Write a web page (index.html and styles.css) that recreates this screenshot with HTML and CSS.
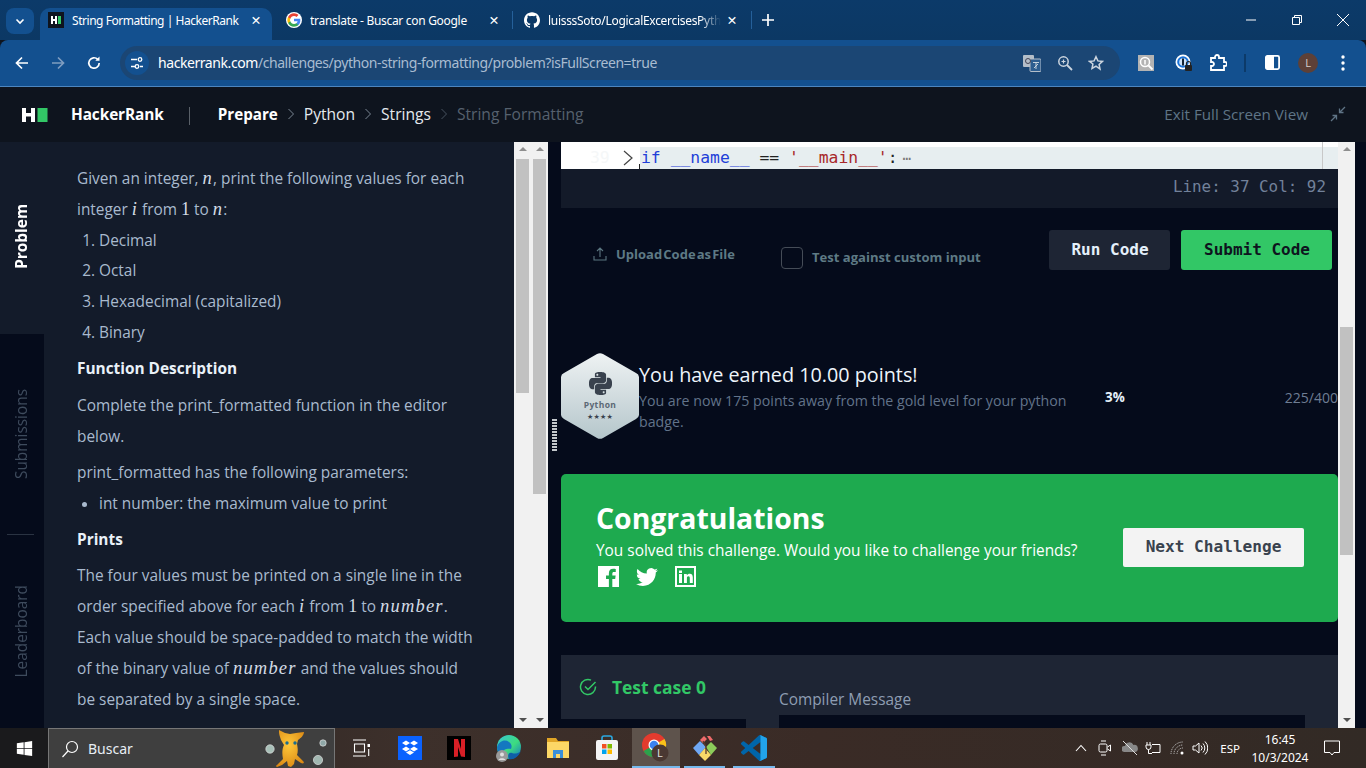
FILE: index.html
```html
<!DOCTYPE html>
<html lang="en">
<head>
<meta charset="utf-8">
<title>String Formatting | HackerRank</title>
<link rel="stylesheet" href="styles.css">
</head>
<body>
<div class="page">
  <div class="tabstrip">
    <div class="tab-menu"><svg width="12" height="12" viewBox="0 0 12 12"><path d="M2.500 4.500 6 8l3.500-3.500" fill="none" stroke="#fff" stroke-width="1.600"/></svg></div>
    <div class="tab tab-active">
      <svg class="fav" viewBox="0 0 16 16"><rect width="16" height="16" fill="#0e141e"/><path d="M3 4h2v3h2V4h2v8H7V9H5v3H3z" fill="#fff"/><rect x="10" y="4" width="3" height="8" fill="#32c766"/></svg>
      <span class="tab-title">String Formatting | HackerRank</span>
      <span class="tab-x">✕</span>
    </div>
    <div class="tab tab-2">
      <svg class="fav" viewBox="0 0 48 48"><circle cx="24" cy="24" r="24" fill="#fff"/><path fill="#4285f4" d="M43 24.500c0-1.400-.1-2.700-.4-4H24v7.600h10.800c-.5 2.500-1.900 4.600-4 6v5h6.500C41 35.600 43 30.500 43 24.500z"/><path fill="#34a853" d="M24 44c5.400 0 9.900-1.800 13.300-4.900l-6.500-5c-1.800 1.200-4.100 1.900-6.800 1.900-5.200 0-9.700-3.500-11.200-8.300H6.100v5.200C9.400 39.500 16.200 44 24 44z"/><path fill="#fbbc05" d="M12.800 27.700c-.4-1.200-.6-2.400-.6-3.700s.2-2.500.6-3.700v-5.200H6.100C4.700 17.800 4 20.800 4 24s.7 6.200 2.100 8.900z"/><path fill="#ea4335" d="M24 12c3 0 5.600 1 7.700 3l5.700-5.700C33.900 6.100 29.400 4 24 4 16.200 4 9.400 8.500 6.100 15.100l6.700 5.200C14.300 15.500 18.800 12 24 12z"/></svg>
      <span class="tab-title">translate - Buscar con Google</span>
      <span class="tab-x">✕</span>
    </div>
    <span class="tab-sep"></span>
    <div class="tab tab-3">
      <svg class="fav" viewBox="0 0 24 24"><path fill="#fff" d="M12 .297c-6.630 0-12 5.373-12 12 0 5.303 3.438 9.800 8.205 11.385.6.113.82-.258.82-.577 0-.285-.01-1.040-.015-2.040-3.338.724-4.042-1.610-4.042-1.610C4.422 18.070 3.633 17.700 3.633 17.700c-1.087-.744.084-.729.084-.729 1.205.084 1.838 1.236 1.838 1.236 1.070 1.835 2.809 1.305 3.495.998.108-.776.417-1.305.76-1.605-2.665-.3-5.466-1.332-5.466-5.930 0-1.310.465-2.380 1.235-3.220-.135-.303-.54-1.523.105-3.176 0 0 1.005-.322 3.300 1.230.96-.267 1.980-.399 3-.405 1.020.006 2.040.138 3 .405 2.280-1.552 3.285-1.230 3.285-1.230.645 1.653.24 2.873.12 3.176.765.84 1.230 1.910 1.230 3.220 0 4.610-2.805 5.625-5.475 5.920.42.36.81 1.096.81 2.220 0 1.606-.015 2.896-.015 3.286 0 .315.21.69.825.57C20.565 22.092 24 17.592 24 12.297c0-6.627-5.373-12-12-12"/></svg>
      <span class="tab-title tab-fade">luisssSoto/LogicalExcercisesPyth</span>
      <span class="tab-x">✕</span>
    </div>
    <span class="tab-sep"></span>
    <svg class="tab-plus" width="14" height="14" viewBox="0 0 14 14"><path d="M7 1v12M1 7h12" stroke="#fff" stroke-width="1.700"/></svg>
    <div class="win-controls">
      <svg width="12" height="12" viewBox="0 0 12 12"><path d="M1 6h10" stroke="#fff"/></svg>
      <svg width="12" height="12" viewBox="0 0 12 12"><path d="M1.500 3.500h7v7h-7zM3.500 3.500v-2h7v7h-2" fill="none" stroke="#fff"/></svg>
      <svg width="14" height="14" viewBox="0 0 14 14"><path d="M1 1l12 12M13 1 1 13" stroke="#fff"/></svg>
    </div>
  </div>

  <div class="toolbar">
    <svg class="nav-ic" width="16" height="16" viewBox="0 0 16 16"><path d="M14 8H2.500M8 2.500 2.500 8 8 13.500" fill="none" stroke="#fff" stroke-width="1.700"/></svg>
    <svg class="nav-ic" width="16" height="16" viewBox="0 0 16 16"><path d="M2 8h11.500M8 2.500 13.500 8 8 13.500" fill="none" stroke="#7f9dc0" stroke-width="1.700"/></svg>
    <svg class="nav-ic" width="16" height="16" viewBox="0 0 16 16"><path d="M13.200 8a5.200 5.200 0 1 1-1.500-3.700" fill="none" stroke="#fff" stroke-width="1.700"/><path d="M13.500 1.500v4.200H9.300z" fill="#fff"/></svg>
    <div class="omnibox">
      <span class="chip"><svg width="14" height="14" viewBox="0 0 14 14"><path d="M1 3.500h6M10 10.500h3M1 10.500h4" stroke="#fff" stroke-width="1.400"/><circle cx="10" cy="3.500" r="1.800" fill="none" stroke="#fff" stroke-width="1.300"/><circle cx="7" cy="10.500" r="1.800" fill="none" stroke="#fff" stroke-width="1.300"/></svg></span>
      <span class="url"><span class="url-host">hackerrank.com</span>/challenges/python-string-formatting/problem?isFullScreen=true</span>
      <span class="omni-icons">
        <svg width="18" height="18" viewBox="0 0 18 18"><rect x="0" y="1" width="11" height="12" rx="1" fill="#b4bec9"/><rect x="7" y="5" width="11" height="12.500" rx="1" fill="#2d5d8f" stroke="#b4bec9"/><circle cx="5" cy="7" r="2.500" fill="none" stroke="#445" stroke-width="1"/><path d="M10 8.500h6M13 8v7M11 14l4-4" stroke="#d5dce3" stroke-width=".9"/></svg>
        <svg width="16" height="16" viewBox="0 0 16 16"><circle cx="6.500" cy="6.500" r="4.700" fill="none" stroke="#ccd5df" stroke-width="1.500"/><path d="M10 10l5 5" stroke="#ccd5df" stroke-width="1.800"/><path d="M4.500 6.500h4M6.500 4.500v4" stroke="#ccd5df" stroke-width="1.200"/></svg>
        <svg width="16" height="16" viewBox="0 0 16 16"><path d="M8 1.700l1.900 4.200 4.600.5-3.400 3.100.9 4.500L8 11.200l-4 2.300.9-4.500L1.500 6.400l4.600-.5z" fill="none" stroke="#ccd5df" stroke-width="1.500"/></svg>
      </span>
    </div>
    <div class="ext-icons">
      <svg width="16" height="16" viewBox="0 0 16 16"><rect width="16" height="16" fill="#b3b3b3"/><circle cx="7" cy="7" r="4.500" fill="none" stroke="#fff" stroke-width="1.500"/><path d="M10.500 10.500l4 4" stroke="#fff" stroke-width="1.800"/><path d="M7 5v4.500" stroke="#fff" stroke-width="1.500"/></svg>
      <svg width="18" height="18" viewBox="0 0 18 18"><circle cx="8" cy="8" r="7.500" fill="#fff"/><circle cx="8" cy="8" r="5.800" fill="#1a73d9"/><circle cx="8" cy="8" r="3.800" fill="#cfe3f7"/><rect x="7" y="4.500" width="2" height="7" fill="#123"/><rect x="10" y="11" width="7" height="6" rx="1" fill="#222"/><path d="M11.500 11V9.500a2 2 0 0 1 4 0V11" fill="none" stroke="#222" stroke-width="1.200"/></svg>
      <svg width="18" height="18" viewBox="0 0 18 18"><path d="M2 4h4V3a2 2 0 0 1 4 0v1h5v4h1a2 2 0 0 1 0 4h-1v4H2v-4h1a2 2 0 0 0 0-4H2z" fill="none" stroke="#fff" stroke-width="1.800"/></svg>
      <span class="ext-sep"></span>
      <svg width="15" height="15" viewBox="0 0 15 15"><rect x=".9" y=".9" width="13.200" height="13.200" rx="1.500" fill="none" stroke="#fff" stroke-width="1.800"/><rect x="1" y="1" width="8" height="13" fill="#fff"/></svg>
      <span class="avatar">L</span>
      <svg width="4" height="16" viewBox="0 0 4 16"><circle cx="2" cy="2" r="1.700" fill="#fff"/><circle cx="2" cy="8" r="1.700" fill="#fff"/><circle cx="2" cy="14" r="1.700" fill="#fff"/></svg>
    </div>
  </div>

  <header class="hr-header">
    <svg class="hr-logo" width="26" height="16" viewBox="0 0 26 16"><path d="M0 1h4v5h5V1h4v14H9V9.500H4V15H0z" fill="#fff"/><rect x="15.500" y="1" width="10" height="14" fill="#32c766"/></svg>
    <span class="hr-name">HackerRank</span>
    <span class="hr-div"></span>
    <nav class="crumbs">
      <b>Prepare</b>
      <svg class="chev" width="26" height="12" viewBox="0 0 26 12"><path d="M10.500 1l5 5-5 5" fill="none" stroke="#7b8794"/></svg>
      <span>Python</span>
      <svg class="chev" width="26" height="12" viewBox="0 0 26 12"><path d="M10.500 1l5 5-5 5" fill="none" stroke="#7b8794"/></svg>
      <span>Strings</span>
      <svg class="chev" width="26" height="12" viewBox="0 0 26 12"><path d="M10.500 1l5 5-5 5" fill="none" stroke="#47525f"/></svg>
      <span class="dim">String Formatting</span>
    </nav>
    <span class="exit">Exit Full Screen View</span>
    <svg class="exit-ic" width="16" height="16" viewBox="0 0 16 16"><path d="M15 1 9.500 6.500M9.500 2.500v4h4M1 15l5.500-5.500M6.500 13.500v-4h-4" fill="none" stroke="#5f7486" stroke-width="1.300"/></svg>
  </header>

  <main class="main">
    <aside class="rail">
      <div class="rail-tab rail-on"><span class="vtext">Problem</span></div>
      <div class="rail-tab rail-sub"><span class="vtext">Submissions</span></div>
      <div class="rail-rule"></div>
      <div class="rail-tab rail-lead"><span class="vtext">Leaderboard</span></div>
    </aside>

    <section class="problem">
      <p class="p-tight">Given an integer, <i class="m">n</i>, print the following values for each integer <i class="m">i</i> from <span class="m1">1</span> to <i class="m">n</i>:</p>
      <ol>
        <li>Decimal</li>
        <li>Octal</li>
        <li>Hexadecimal (capitalized)</li>
        <li>Binary</li>
      </ol>
      <h4>Function Description</h4>
      <p>Complete the print_formatted function in the editor below.</p>
      <p class="p-tight">print_formatted has the following parameters:</p>
      <ul><li>int number: the maximum value to print</li></ul>
      <h4>Prints</h4>
      <p>The four values must be printed on a single line in the order specified above for each <i class="m">i</i> from <span class="m1">1</span> to <i class="m">number</i>. Each value should be space-padded to match the width of the binary value of <i class="m">number</i> and the values should be separated by a single space.</p>
    </section>

    <div class="sb"><span class="up"></span><span class="thumb thumb-a"></span><span class="sb-fill"></span><span class="down"></span></div>
    <div class="sb"><span class="up"></span><span class="thumb thumb-b"></span><span class="sb-fill"></span><span class="down"></span></div>

    <div class="gutter"><span class="grip"></span></div>

    <section class="right">
      <div class="editor">
        <span class="ln">39</span>
        <svg class="fold" width="12" height="16" viewBox="0 0 12 16"><path d="M2 1l8 7-8 7" fill="none" stroke="#444" stroke-width="1.200"/></svg>
        <div class="code-line"><span class="kw">if</span> <span class="kw">__name__</span> == <span class="str">'__main__'</span>:<span class="dots">⋯</span><span class="ruler"></span></div>
      </div>
      <div class="status">Line: 37 Col: 92</div>

      <div class="actions">
        <div class="upload">
          <svg width="14" height="14" viewBox="0 0 14 14"><path d="M7 10V1.500M4 4l3-3 3 3M1 9v4h12V9" fill="none" stroke="#5b7680" stroke-width="1.100"/></svg>
          <span>Upload Code as File</span>
        </div>
        <div class="custom"><span class="check"></span><span>Test against custom input</span></div>
        <button class="btn btn-run">Run Code</button>
        <button class="btn btn-submit">Submit Code</button>
      </div>

      <div class="earned">
        <div class="badge">
          <svg class="hex" width="78" height="86" viewBox="0 0 78 86"><defs><linearGradient id="hexg" x1="0" y1="0" x2="0" y2="1"><stop offset="0" stop-color="#eef2f3"/><stop offset="1" stop-color="#b5c6cb"/></linearGradient></defs><path d="M36 1a6 6 0 0 1 6 0l33 19a5 5 0 0 1 3 5v36a5 5 0 0 1-3 5L42 85a6 6 0 0 1-6 0L3 66a5 5 0 0 1-3-5V25a5 5 0 0 1 3-5z" fill="url(#hexg)"/></svg>
          <svg class="py" width="23" height="23" viewBox="0 0 24 24"><path fill="#39424e" d="M14.250.18l.9.2.73.26.59.3.45.32.34.34.25.34.16.33.1.3.04.26.02.2-.01.13V8.500l-.05.63-.13.55-.21.46-.26.38-.3.31-.33.25-.35.19-.35.14-.33.1-.3.07-.26.04-.21.02H8.770l-.69.05-.59.14-.5.22-.41.27-.33.32-.27.35-.2.36-.15.37-.1.35-.07.32-.04.27-.02.21v3.060H3.170l-.21-.03-.28-.07-.32-.12-.35-.18-.36-.26-.36-.36-.35-.46-.32-.59-.28-.73-.21-.88-.14-1.050-.05-1.230.06-1.220.16-1.040.24-.87.32-.71.36-.57.4-.44.42-.33.42-.24.4-.16.36-.1.32-.05.24-.01h.16l.06.01h8.160v-.83H6.180l-.01-2.750-.02-.37.05-.34.11-.31.17-.28.25-.26.31-.23.38-.2.44-.18.51-.15.58-.12.64-.1.71-.06.77-.04.84-.02 1.270.05zm-6.300 1.980l-.23.33-.08.41.08.41.23.34.33.22.41.09.41-.09.33-.22.23-.34.08-.41-.08-.41-.23-.33-.33-.22-.41-.09-.41.09zm13.090 3.950l.28.06.32.12.35.18.36.27.36.35.35.47.32.59.28.73.21.88.14 1.040.05 1.230-.06 1.230-.16 1.040-.24.86-.32.71-.36.57-.4.45-.42.33-.42.24-.4.16-.36.09-.32.05-.24.02-.16-.01h-8.220v.82h5.840l.01 2.760.02.36-.05.34-.11.31-.17.29-.25.25-.31.24-.38.2-.44.17-.51.15-.58.13-.64.09-.71.07-.77.04-.84.01-1.270-.04-1.070-.14-.9-.2-.73-.25-.59-.3-.45-.33-.34-.34-.25-.34-.16-.33-.1-.3-.04-.25-.02-.2.01-.13v-5.340l.05-.64.13-.54.21-.46.26-.38.3-.32.33-.24.35-.2.35-.14.33-.1.3-.06.26-.04.21-.02.13-.01h5.840l.69-.05.59-.14.5-.21.41-.28.33-.32.27-.35.2-.36.15-.36.1-.35.07-.32.04-.28.02-.21V6.070h2.090l.14.01zm-6.470 14.250l-.23.33-.08.41.08.41.23.33.33.23.41.08.41-.08.33-.23.23-.33.08-.41-.08-.41-.23-.33-.33-.23-.41-.08-.41.08z"/></svg>
          <span class="badge-name">Python</span>
          <span class="badge-stars">★★★★</span>
        </div>
        <div class="earned-text">
          <div class="earned-title">You have earned 10.00 points!</div>
          <div class="earned-sub">You are now 175 points away from the gold level for your python badge.</div>
        </div>
        <span class="pct">3%</span>
        <span class="score">225/400</span>
      </div>

      <div class="congrats">
        <div class="congrats-main">
          <div class="congrats-title">Congratulations</div>
          <div class="congrats-sub">You solved this challenge. Would you like to challenge your friends?</div>
          <div class="social">
            <svg width="21" height="21" viewBox="0 0 22 22"><path fill="#fff" fill-rule="evenodd" d="M0 0h22v22h-7v-8.500h3l.5-3.500H15V8c0-1 .4-1.700 1.800-1.700h1.800V3.200c-.4 0-1.500-.2-2.700-.2-2.700 0-4.500 1.600-4.500 4.600V10H8.400v3.500h3V22H0z"/></svg>
            <svg width="22" height="22" viewBox="0 0 24 24"><path fill="#fff" d="M23.953 4.570a10 10 0 01-2.825.775 4.958 4.958 0 002.163-2.723c-.951.555-2.005.959-3.127 1.184a4.920 4.920 0 00-8.384 4.482C7.690 8.095 4.067 6.130 1.640 3.162a4.822 4.822 0 00-.666 2.475c0 1.710.87 3.213 2.188 4.096a4.904 4.904 0 01-2.228-.616v.06a4.923 4.923 0 003.946 4.827 4.996 4.996 0 01-2.212.085 4.936 4.936 0 004.604 3.417 9.867 9.867 0 01-6.102 2.105c-.39 0-.779-.023-1.170-.067a13.995 13.995 0 007.557 2.209c9.053 0 13.998-7.496 13.998-13.985 0-.21 0-.42-.015-.63A9.935 9.935 0 0024 4.590z"/></svg>
            <svg width="21" height="21" viewBox="0 0 21 21"><path fill="#fff" fill-rule="evenodd" d="M0 0h21v21H0zM2 2v17h17V2zM4 8h3v9H4zM4 4.500h3v2.500H4zM9 8h2.800v1.300C12.400 8.400 13.400 7.800 14.800 7.800c2.200 0 3 1.500 3 3.800V17h-3v-4.800c0-1.200-.3-2-1.400-2-1.200 0-1.500.9-1.500 2V17H9z"/></svg>
          </div>
        </div>
        <button class="btn-next">Next Challenge</button>
      </div>

      <div class="testcase">
        <div class="tc-left">
          <div class="tc-head">
            <svg width="18" height="18" viewBox="0 0 18 18"><path d="M16.500 8.500V9A7.500 7.500 0 1 1 12 2.100" fill="none" stroke="#32c766" stroke-width="1.500"/><path d="M6 8.500l3 3 7.500-7.500" fill="none" stroke="#32c766" stroke-width="1.500"/></svg>
            <span>Test case 0</span>
          </div>
          <div class="tc-box"></div>
        </div>
        <div class="tc-right">
          <div class="tc-label">Compiler Message</div>
          <div class="tc-output"></div>
        </div>
      </div>
    </section>

    <div class="sb sb-page"><span class="up"></span><span class="thumb thumb-c"></span><span class="sb-fill"></span><span class="down"></span></div>
    <div class="edge"></div>
  </main>

  <footer class="taskbar">
    <div class="start"><svg width="17" height="17" viewBox="0 0 20 20"><path fill="#fff" d="M1 3.800 9 2.700v6.700H1zM10 2.500 19 1.200v8.200h-9zM1 10.400h8v6.900l-8-1.100zM10 10.400h9v8.400l-9-1.300z"/></svg></div>
    <div class="search">
      <svg width="18" height="18" viewBox="0 0 18 18"><circle cx="11" cy="7" r="5.500" fill="none" stroke="#fff" stroke-width="1.200"/><path d="M7 11l-5.500 6" stroke="#fff" stroke-width="1.200"/></svg>
      <span>Buscar</span>
      <svg class="mascot" width="62" height="40" viewBox="0 0 62 40"><defs><radialGradient id="mg" cx=".45" cy=".4" r=".7"><stop offset="0" stop-color="#ffc83a"/><stop offset="1" stop-color="#d98512"/></radialGradient></defs><path fill="url(#mg)" d="M14 1l6 3 5 1 6-1 8-1c0 3-3 6-6 8l-1 4c1 5 1 8 0 11l6 6c2 2 0 3-2 2l-6-4-1 5-3 3-3-1-1-5-5 4-5 2c-1 0-1-2 0-2l6-6c-1-5-1-10 1-14l-3-5c-1-3-2-6-2-8z"/><circle cx="22" cy="14" r="1.700" fill="#1b6d90"/><circle cx="30" cy="14" r="1.700" fill="#1b6d90"/><circle cx="5" cy="20" r="4.200" fill="#a8c0b8" stroke="#ddd" stroke-width=".7"/><circle cx="58" cy="14" r="3.200" fill="#8fa8a8" stroke="#ddd" stroke-width=".7"/><circle cx="53" cy="31" r="4.600" fill="#a2b8b2" stroke="#ddd" stroke-width=".7"/></svg>
    </div>
    <div class="task-icons">
      <span class="ti"><svg width="18" height="20" viewBox="0 0 18 20"><path d="M1 2h13M1 18h13M2.500 6h10v8h-10z" fill="none" stroke="#fff" stroke-width="1.100"/><rect x="15.500" y="6" width="2.500" height="3" fill="#fff"/><path d="M16.700 11v7" stroke="#fff" stroke-width="1.100"/></svg></span>
      <span class="ti"><svg width="24" height="24" viewBox="0 0 24 24"><rect width="24" height="24" fill="#0a62ff"/><path fill="#fff" d="M8 4.500l4 2.500-4 2.500L4 7zM16 4.500 20 7l-4 2.500L12 7zM8 10.500l4 2.500-4 2.500L4 13zM16 10.500l4 2.500-4 2.500L12 13zM8 16.500l4-2.300 4 2.300-4 2.500z"/></svg></span>
      <span class="ti"><svg width="24" height="24" viewBox="0 0 24 24"><rect width="24" height="24" fill="#000"/><path fill="#d81f26" d="M7 3h4l3 10V3h4v18l-4-.6L11 11v9.600L7 21z"/></svg></span>
      <span class="ti"><svg width="26" height="28" viewBox="0 0 26 28"><defs><linearGradient id="eg" x1="0" y1="0" x2="1" y2="1"><stop offset="0" stop-color="#37c5d8"/><stop offset=".55" stop-color="#3ddc7e"/><stop offset="1" stop-color="#1173c9"/></linearGradient></defs><circle cx="13" cy="13" r="12" fill="url(#eg)"/><path fill="#1478c0" d="M1 13c2-6 8-8 12-5 3 2 3 5 2 7-3-1-8 0-9 4-1 3 0 5 2 6C4 23 1 18 1 13z"/><path d="M13 25c5 1 9-2 12-8-3 3-7 3-9 2-3-1-5 2-3 6z" fill="#0f5ea8"/><circle cx="6" cy="22" r="6" fill="#9a9a9a"/><circle cx="6" cy="20.500" r="2" fill="#e0e0e0"/><path d="M2.500 26c.5-2.500 6.500-2.500 7 0z" fill="#e0e0e0"/></svg></span>
      <span class="ti"><svg width="24" height="22" viewBox="0 0 24 22"><path fill="#e0a526" d="M1 1h9l2 3h11v4H1z"/><rect x="1" y="5" width="22" height="16" fill="#fcd766"/><path fill="#3a8fd8" d="M7 13h10v8h-3v-4h-4v4H7z"/></svg></span>
      <span class="ti"><svg width="24" height="26" viewBox="0 0 24 26"><path d="M7 6V3a2 2 0 0 1 2-2h6a2 2 0 0 1 2 2v3" fill="none" stroke="#2ba8e0" stroke-width="1.600"/><rect x="1" y="5" width="22" height="20" rx="2" fill="#f4f4f4"/><rect x="7" y="9" width="4.500" height="4.500" fill="#f25022"/><rect x="12.500" y="9" width="4.500" height="4.500" fill="#7fba00"/><rect x="7" y="14.500" width="4.500" height="4.500" fill="#00a4ef"/><rect x="12.500" y="14.500" width="4.500" height="4.500" fill="#ffb900"/></svg></span>
      <span class="ti ti-active"><svg width="28" height="30" viewBox="0 0 28 30"><circle cx="12" cy="12" r="12" fill="#e33b2e"/><path d="M12 12 1.500 18A12 12 0 0 0 12 24z" fill="#2ba24c"/><path d="M12 12 22.500 6A12 12 0 0 1 12 24z" fill="#f9c11a"/><circle cx="12" cy="12" r="5.500" fill="#fff"/><circle cx="12" cy="12" r="4.300" fill="#3b82f0"/><circle cx="18" cy="20" r="8.500" fill="#4a3832"/><text x="18" y="24" class="ti-l">L</text></svg></span>
      <span class="ti ti-open"><svg width="26" height="28" viewBox="0 0 26 28"><path fill="#6fa8f5" d="M1 14l7-7 6 6-7 8z"/><path fill="#8ccc5a" d="M14 13l5-5 6 6-6 7z"/><path fill="#f8d868" d="M7 21l6-7 6 7-6 6z"/><path fill="#ef6b6b" d="M8 6l4-4 3 3-4 4zM15 2l3 0 3 4-3 1z"/><path d="M11 7l3 6v7" fill="none" stroke="#5b3a2e" stroke-width="1.300"/></svg></span>
      <span class="ti ti-open"><svg width="26" height="26" viewBox="0 0 24 24"><path fill="#0065a9" d="M23.150 2.587 18.210.21a1.494 1.494 0 0 0-1.705.29l-9.460 8.630-4.120-3.128a.999.999 0 0 0-1.276.057L.327 7.261A1 1 0 0 0 .326 8.740L3.899 12 .326 15.260a1 1 0 0 0 .001 1.479L1.650 17.940a.999.999 0 0 0 1.276.057l4.120-3.128 9.460 8.630a1.492 1.492 0 0 0 1.704.29l4.942-2.377A1.500 1.500 0 0 0 24 20.060V3.939a1.500 1.500 0 0 0-.85-1.352zm-5.146 14.861L10.826 12l7.178-5.448v10.896z"/><path fill="#22a3ea" d="M17 0.300c.4-.2 .9-.2 1.200 0l5 2.300c.5.2.8.800.8 1.300v16.100c0 .6-.3 1.100-.8 1.400l-5 2.300c-.4.2-.9.100-1.300-.1.600.2 1.100-.2 1.100-.9V1.200c0-.7-.5-1.100-1-.9z"/></svg></span>
    </div>
    <div class="tray">
      <svg width="12" height="8" viewBox="0 0 12 8"><path d="M1 7l5-5.500L11 7" fill="none" stroke="#fff" stroke-width="1.100"/></svg>
      <svg width="14" height="18" viewBox="0 0 14 18"><rect x="1" y="5" width="8" height="8" rx="1.500" fill="none" stroke="#fff"/><path d="M9.500 8l3-2v6l-3-2M3 2h5M3 16h5" fill="none" stroke="#fff"/></svg>
      <svg width="16" height="16" viewBox="0 0 16 16"><path fill="#888" d="M2 12a3 3 0 0 1 1-6 4.500 4.500 0 0 1 8.500-1A3.500 3.500 0 0 1 13 12z"/><path d="M1 1l14 14" stroke="#ddd" stroke-width="1"/></svg>
      <svg width="16" height="14" viewBox="0 0 16 14"><path d="M7 3.500h8v8H7M2 1v3M5 1v3M1 4h5v2a2.500 2.500 0 0 1-5 0zM3.500 8.500v4H7" fill="none" stroke="#fff"/></svg>
      <svg width="16" height="14" viewBox="0 0 16 14"><path d="M1 13A12 12 0 0 1 13 1M4 13a9 9 0 0 1 9-9M7 13a6 6 0 0 1 6-6" fill="none" stroke="#bbb" stroke-dasharray="1.200 .8"/><circle cx="12" cy="12" r="1.500" fill="#fff"/></svg>
      <svg width="16" height="16" viewBox="0 0 16 16"><path d="M1 6v4h2.500L7 13V3L3.500 6zM9 5.500a3.500 3.500 0 0 1 0 5M11 3.500a6.500 6.500 0 0 1 0 9M13 1.500a9 9 0 0 1 0 13" fill="none" stroke="#fff"/></svg>
      <span class="lang">ESP</span>
      <span class="clock"><span>16:45</span><span>10/3/2024</span></span>
      <svg class="notif" width="16" height="16" viewBox="0 0 16 16"><path d="M.5 1h15v11.500h-5.500L8 15l-2-2.500H.5z" fill="none" stroke="#fff"/></svg>
    </div>
  </footer>
</div>
</body>
</html>
```

FILE: styles.css
```css
* { box-sizing: border-box; }
html, body { margin: 0; padding: 0; height: 100%; overflow: hidden; }
body { font-family: "Open Sans", "Noto Sans", sans-serif; background: #0e141e; }
p, h4, ol, ul { margin: 0; padding: 0; }
.page { width: 1366px; height: 768px; display: flex; flex-direction: column; overflow: hidden; }

/* browser tabs */
.tabstrip { height: 40px; flex: none; background: linear-gradient(#0c3a69, #0c3864); display: flex; align-items: flex-end; padding-left: 6px; color: #fff; }
.tab-menu { width: 28px; height: 26px; margin-bottom: 6px; border-radius: 8px; background: #13508f; display: flex; align-items: center; justify-content: center; }
.tab { height: 32px; padding-bottom: 8px; display: flex; align-items: center; font-family: "Noto Sans", sans-serif; font-size: 12px; letter-spacing: -.3px; position: relative; }
.tab-active { width: 232px; margin-left: 6px; padding-left: 8px; background: #13508f; border-radius: 10px 10px 0 0; letter-spacing: -.46px; }
.tab-2 { width: 240px; padding-left: 14px; }
.tab-3 { width: 238px; padding-left: 11px; }
.fav { width: 16px; height: 16px; flex: none; margin-right: 8px; }
.tab-title { width: 173px; white-space: nowrap; overflow: hidden; }
.tab-fade { -webkit-mask-image: linear-gradient(90deg, #000 88%, transparent); mask-image: linear-gradient(90deg, #000 88%, transparent); }
.tab-x { font-size: 12.5px; margin-left: 4px; width: 14px; text-align: center; font-family: "DejaVu Sans", sans-serif; letter-spacing: 0; }
.tab-sep { width: 1px; height: 18px; background: #25609a; margin-bottom: 11px; }
.tab-plus { margin: 0 0 13px 9px; }
.win-controls { margin-left: auto; width: 105px; height: 40px; margin-right: 16px; display: flex; align-items: center; justify-content: space-between; }

/* browser toolbar */
.toolbar { height: 47px; flex: none; background: #13508f; border-bottom: 1px solid #4d86bf; border-radius: 8px 8px 0 0; display: flex; align-items: center; padding: 0 0 1px 14px; }
.nav-ic { margin-right: 20px; flex: none; }
.omnibox { width: 1000px; height: 34px; border-radius: 17px; background: #1b4674; display: flex; align-items: center; padding-left: 5px; flex: none; margin-left: -2px; }
.chip { width: 24px; height: 24px; border-radius: 12px; background: #13508f; display: flex; align-items: center; justify-content: center; flex: none; }
.url { margin-left: 9px; font-family: "Noto Sans", sans-serif; font-size: 14px; color: #a9bcd1; white-space: nowrap; letter-spacing: -.43px; }
.url-host { color: #fff; }
.omni-icons { margin-left: auto; width: 81px; margin-right: 16px; display: flex; align-items: center; justify-content: space-between; }
.ext-icons { margin-left: 18px; display: flex; align-items: center; }
.ext-icons > :nth-child(2) { margin-left: 21px; }
.ext-icons > :nth-child(3) { margin-left: 16px; }
.ext-icons > :nth-child(4) { margin-left: 17px; }
.ext-icons > :nth-child(5) { margin-left: 19px; }
.ext-icons > :nth-child(6) { margin-left: 18px; }
.ext-icons > :nth-child(7) { margin-left: 23px; }
.ext-sep { width: 2px; height: 18px; background: #0c3a69; }
.avatar { width: 20px; height: 20px; border-radius: 10px; background: #5d4037; color: #d8cfcc; font-size: 11px; display: flex; align-items: center; justify-content: center; }

/* HackerRank header */
.hr-header { height: 55px; flex: none; background: #0e141e; display: flex; align-items: center; padding: 0 20px 2px 22px; color: #fff; }
.hr-logo { margin-top: 3px; }
.hr-name { margin-left: 23px; margin-top: 2px; font-weight: 700; font-size: 15.4px; letter-spacing: -.1px; }
.hr-div { width: 1px; height: 18px; background: #596068; margin: 4px 28px 0 25px; }
.crumbs { display: flex; align-items: center; font-size: 15.6px; color: #e4e9ee; }
.crumbs b { font-weight: 700; color: #fff; font-size: 15.2px; }
.chev { flex: none; margin-top: 1px; }
.dim { color: #56616e; }
.exit { margin-left: auto; font-size: 15.2px; color: #5f7486; }
.exit-ic { margin-left: 22px; }

/* main */
.main { flex: 1; min-height: 0; display: flex; background: #050b1b; }
.rail { width: 44px; flex: none; display: flex; flex-direction: column; background: #050b1b; }
.rail-tab { display: flex; align-items: center; justify-content: center; }
.rail-on { height: 192px; background: #131b2a; color: #fff; font-weight: 700; padding-bottom: 4px; }
.rail-sub { height: 200px; color: #3e4b5d; }
.rail-lead { flex: 1; color: #3e4b5d; }
.rail-rule { height: 1px; width: 27px; margin: 0 0 0 7px; background: #2a3342; flex: none; }
.vtext { writing-mode: vertical-rl; transform: rotate(180deg); font-size: 15.4px; line-height: 20px; }

.problem { width: 470px; flex: none; background: #131b2a; padding: 22px 38px 0 33px; font-size: 15.4px; line-height: 30.8px; color: #a9bace; overflow: hidden; }
.problem p, .problem ul, .problem ol { margin-bottom: 5.3px; }
.problem h4 { margin-bottom: 6px; }
.problem .p-tight { margin-bottom: 0; }
.problem ol { padding-left: 22px; }
.problem ul { padding-left: 22px; }
.problem h4 { color: #e9f1f8; font-weight: 700; font-size: 15.4px; }
.m { font-family: "Liberation Serif", serif; font-size: 18.5px; letter-spacing: 1.2px; line-height: 20px; color: #d3dbe5; }
.m1 { font-family: "Liberation Serif", serif; font-size: 18px; line-height: 20px; color: #d3dbe5; }

.sb { width: 17px; flex: none; background: #f1f1f1; display: flex; flex-direction: column; align-items: center; }
.up, .down { width: 0; height: 0; flex: none; border-left: 4px solid transparent; border-right: 4px solid transparent; }
.up { border-bottom: 4px solid #8e8e8e; margin: 5px 0 8px; }
.down { border-top: 4px solid #505050; margin: 8px 0 6px; }
.thumb { width: 13px; flex: none; background: #c1c1c1; }
.thumb-a { height: 234px; }
.thumb-b { height: 335px; }
.thumb-c { height: 228px; margin-top: 168px; }
.sb-fill { flex: 1; }

.gutter { width: 13px; flex: none; background: #050b1b; position: relative; }
.grip { position: absolute; left: 4px; top: 277px; width: 5px; height: 33px; background-image: radial-gradient(circle at 1px 1px, #c4c8cc 1px, transparent 1.2px); background-size: 2px 3px; }

/* right column */
.right { width: 777px; flex: none; display: flex; flex-direction: column; overflow: hidden; background: #050b1b; }
.editor { height: 27px; flex: none; background: #fff; display: flex; align-items: flex-end; font-family: "DejaVu Sans Mono", monospace; font-size: 16.4px; }
.ln { width: 61px; padding-left: 29px; color: #f5f7f8; line-height: 22px; }
.fold { margin: 0 6px 3px 0; }
.code-line { flex: 1; height: 22px; background: #e7eef0; line-height: 22px; color: #222; white-space: pre; position: relative; padding-left: 1px; }
.code-line::before { content: ""; position: absolute; left: -1px; bottom: 0; width: 1px; height: 5px; background: #222; }
.kw { color: #1f3fd8; }
.str { color: #a8282a; }
.dots { color: #777; font-size: 14px; margin-left: 5px; }
.ruler { position: absolute; top: -5px; bottom: 0; left: 682px; width: 1px; background: #c8c8c8; }
.status { height: 39px; flex: none; background: #131a29; color: #72819a; font-family: "DejaVu Sans Mono", monospace; font-size: 15.9px; line-height: 36px; text-align: right; padding-right: 12px; }

.actions { height: 145px; flex: none; display: flex; align-items: flex-start; padding: 22px 6px 0 32px; }
.upload { display: flex; align-items: center; gap: 9px; margin-top: 15px; width: 188px; font-size: 13px; font-weight: 700; color: #5e7a85; word-spacing: -2.2px; line-height: 18px; }
.custom { display: flex; align-items: center; gap: 9px; margin-top: 17px; font-size: 13.05px; font-weight: 700; color: #5e7a85; }
.custom span:last-child { margin-top: -3px; }
.check { width: 22px; height: 22px; border: 1px solid #454c57; border-radius: 4px; flex: none; }
.btn { height: 40px; border: 0; border-radius: 3px; font-family: "DejaVu Sans Mono", monospace; font-weight: 700; font-size: 16px; padding: 0 0 2px 1px; }
.btn-run { width: 121px; margin-left: auto; background: #1e2534; color: #e4f0fa; }
.btn-submit { width: 151px; margin-left: 11px; background: #32c766; color: #0e141e; }

.earned { height: 85px; flex: none; display: flex; align-items: flex-start; }
.badge { width: 78px; height: 85px; flex: none; position: relative; display: flex; flex-direction: column; align-items: center; }
.hex { position: absolute; left: 0; top: 0; }
.py { position: relative; margin-top: 19px; }
.badge-name { position: relative; font-size: 8.5px; line-height: 12px; font-weight: 700; color: #5b6875; letter-spacing: .4px; margin-top: 4px; }
.badge-stars { position: relative; font-family: "DejaVu Sans", sans-serif; font-size: 7px; line-height: 12px; color: #39424e; letter-spacing: .2px; }
.earned-text { width: 466px; flex: none; padding-right: 26px; }
.earned-title { font-size: 19.8px; line-height: 27px; color: #eef5fb; margin-top: 8px; }
.earned-sub { font-size: 14.2px; line-height: 21px; color: #62738a; margin-top: 2px; }
.pct { font-size: 13.4px; font-weight: 700; color: #e4f0fa; margin-top: 35px; }
.score { margin-left: auto; margin-top: 35px; font-size: 14px; color: #6e7d93; }

.congrats { height: 148px; margin-top: 36px; flex: none; background: #1eaa4f; border-radius: 5px; display: flex; align-items: flex-start; padding-left: 35px; color: #fff; }
.congrats-main { width: 527px; padding-top: 24px; }
.congrats-title { font-size: 28.4px; font-weight: 700; line-height: 40px; }
.congrats-sub { font-size: 15.4px; line-height: 22px; margin-top: 2px; }
.social { display: flex; gap: 17px; padding-left: 2px; margin-top: 4px; }
.btn-next { width: 181px; height: 39px; margin: 54px 0 0 0; border: 0; border-radius: 2px; background: #f3f3f3; color: #39424e; font-family: "DejaVu Sans Mono", monospace; font-weight: 700; font-size: 16.1px; padding: 0 0 2px; }

.testcase { flex: 1; margin-top: 33px; background: #1e2534; display: flex; align-items: flex-start; min-height: 0; }
.tc-left { width: 218px; flex: none; }
.tc-head { display: flex; align-items: center; gap: 15px; height: 20px; margin-top: 22px; padding-left: 18px; color: #32c766; font-size: 17.4px; font-weight: 700; }
.tc-box { height: 20px; width: 185px; margin-top: 22px; background: #050b1b; }
.tc-right { width: 526px; flex: none; }
.tc-label { font-size: 15.4px; line-height: 20px; margin-top: 35px; color: #8e9db2; }
.tc-output { height: 20px; margin-top: 5px; background: #050b1b; }
.edge { flex: 1; background: #050b1b; }

/* Windows taskbar */
.taskbar { height: 40px; flex: none; display: flex; align-items: stretch; background: linear-gradient(90deg, #25211f, #3d302b 30%, #3a2b26 60%, #322a25); color: #fff; font-size: 12px; }
.start { width: 48px; flex: none; background: #1a1a1c; display: flex; align-items: center; justify-content: center; }
.search { width: 287px; flex: none; background: #3f3f3f; border: 1px solid #767676; border-bottom: 0; display: flex; align-items: center; padding-left: 12px; position: relative; font-family: "Noto Sans", sans-serif; font-size: 14px; color: #e8eef4; }
.search span { margin-left: 9px; }
.mascot { position: absolute; right: 7px; top: 0; }
.task-icons { display: flex; margin-left: 1px; }
.ti { width: 49.33px; height: 40px; flex: none; display: flex; align-items: center; justify-content: center; position: relative; }
.ti-active { background: #5e534c; width: 48px; }
.ti-active::after, .ti-open::after { content: ""; position: absolute; left: 4px; right: 4px; bottom: 0; height: 2px; background: #76b9ed; }
.ti-active::after { left: 0; right: 0; }
.ti-l { font-family: "Noto Sans", sans-serif; font-size: 11px; fill: #ddd; text-anchor: middle; }
.tray { margin-left: auto; display: flex; align-items: center; padding-right: 26px; font-family: "Noto Sans", sans-serif; }
.tray svg:nth-child(2) { margin-left: 11px; }
.tray svg:nth-child(3) { margin-left: 10px; }
.tray svg:nth-child(4) { margin-left: 7px; }
.tray svg:nth-child(5) { margin-left: 9px; }
.tray svg:nth-child(6) { margin-left: 6px; }
.lang { margin-left: 12px; font-size: 11.5px; }
.clock { width: 60px; margin-left: 10px; padding-top: 1px; display: flex; flex-direction: column; align-items: center; font-size: 12px; line-height: 18px; }
.notif { margin-left: 14px; }
```
